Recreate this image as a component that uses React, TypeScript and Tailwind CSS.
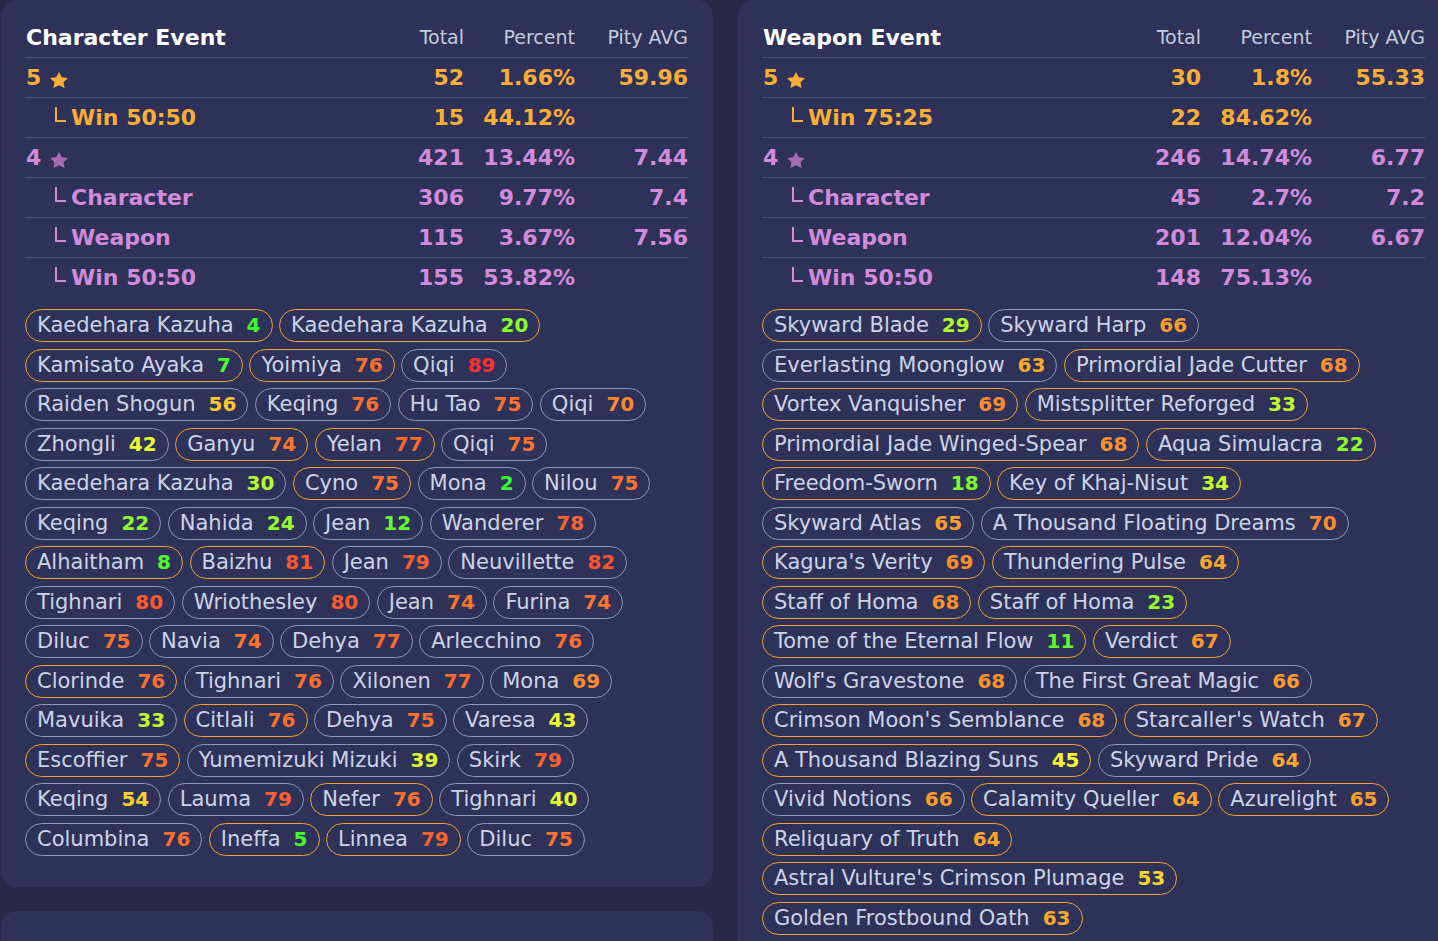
import React from "react";

type Chip = [string, number, boolean]; // name, pity, won 50:50

type StatRow = {
  label: string;
  star?: boolean;
  sub?: boolean;
  tier: 5 | 4;
  total: string;
  percent: string;
  pity?: string;
};

const charRows: Chip[][] = [
  [["Kaedehara Kazuha", 4, true], ["Kaedehara Kazuha", 20, true]],
  [["Kamisato Ayaka", 7, true], ["Yoimiya", 76, true], ["Qiqi", 89, false]],
  [["Raiden Shogun", 56, false], ["Keqing", 76, false], ["Hu Tao", 75, false], ["Qiqi", 70, false]],
  [["Zhongli", 42, false], ["Ganyu", 74, true], ["Yelan", 77, true], ["Qiqi", 75, false]],
  [["Kaedehara Kazuha", 30, false], ["Cyno", 75, true], ["Mona", 2, false], ["Nilou", 75, false]],
  [["Keqing", 22, false], ["Nahida", 24, false], ["Jean", 12, false], ["Wanderer", 78, false]],
  [["Alhaitham", 8, true], ["Baizhu", 81, true], ["Jean", 79, false], ["Neuvillette", 82, false]],
  [["Tighnari", 80, false], ["Wriothesley", 80, false], ["Jean", 74, false], ["Furina", 74, false]],
  [["Diluc", 75, false], ["Navia", 74, false], ["Dehya", 77, false], ["Arlecchino", 76, false]],
  [["Clorinde", 76, true], ["Tighnari", 76, false], ["Xilonen", 77, false], ["Mona", 69, false]],
  [["Mavuika", 33, false], ["Citlali", 76, true], ["Dehya", 75, false], ["Varesa", 43, false]],
  [["Escoffier", 75, true], ["Yumemizuki Mizuki", 39, false], ["Skirk", 79, false]],
  [["Keqing", 54, false], ["Lauma", 79, false], ["Nefer", 76, true], ["Tighnari", 40, false]],
  [["Columbina", 76, false], ["Ineffa", 5, true], ["Linnea", 79, true], ["Diluc", 75, false]],
];

const weaponRows: Chip[][] = [
  [["Skyward Blade", 29, true], ["Skyward Harp", 66, false]],
  [["Everlasting Moonglow", 63, false], ["Primordial Jade Cutter", 68, true]],
  [["Vortex Vanquisher", 69, true], ["Mistsplitter Reforged", 33, true]],
  [["Primordial Jade Winged-Spear", 68, true], ["Aqua Simulacra", 22, true]],
  [["Freedom-Sworn", 18, true], ["Key of Khaj-Nisut", 34, true]],
  [["Skyward Atlas", 65, false], ["A Thousand Floating Dreams", 70, false]],
  [["Kagura's Verity", 69, true], ["Thundering Pulse", 64, true]],
  [["Staff of Homa", 68, true], ["Staff of Homa", 23, true]],
  [["Tome of the Eternal Flow", 11, true], ["Verdict", 67, true]],
  [["Wolf's Gravestone", 68, false], ["The First Great Magic", 66, false]],
  [["Crimson Moon's Semblance", 68, true], ["Starcaller's Watch", 67, true]],
  [["A Thousand Blazing Suns", 45, true], ["Skyward Pride", 64, false]],
  [["Vivid Notions", 66, false], ["Calamity Queller", 64, true], ["Azurelight", 65, true]],
  [["Reliquary of Truth", 64, true]],
  [["Astral Vulture's Crimson Plumage", 53, true]],
  [["Golden Frostbound Oath", 63, true]],
];

const charStats: StatRow[] = [
  { label: "5", star: true, tier: 5, total: "52", percent: "1.66%", pity: "59.96" },
  { label: "Win 50:50", sub: true, tier: 5, total: "15", percent: "44.12%" },
  { label: "4", star: true, tier: 4, total: "421", percent: "13.44%", pity: "7.44" },
  { label: "Character", sub: true, tier: 4, total: "306", percent: "9.77%", pity: "7.4" },
  { label: "Weapon", sub: true, tier: 4, total: "115", percent: "3.67%", pity: "7.56" },
  { label: "Win 50:50", sub: true, tier: 4, total: "155", percent: "53.82%" },
];

const weaponStats: StatRow[] = [
  { label: "5", star: true, tier: 5, total: "30", percent: "1.8%", pity: "55.33" },
  { label: "Win 75:25", sub: true, tier: 5, total: "22", percent: "84.62%" },
  { label: "4", star: true, tier: 4, total: "246", percent: "14.74%", pity: "6.77" },
  { label: "Character", sub: true, tier: 4, total: "45", percent: "2.7%", pity: "7.2" },
  { label: "Weapon", sub: true, tier: 4, total: "201", percent: "12.04%", pity: "6.67" },
  { label: "Win 50:50", sub: true, tier: 4, total: "148", percent: "75.13%" },
];

// green at low pity -> red near hard pity
const pityColor = (v: number) => `hsl(${Math.round(120 - (Math.min(v, 90) / 90) * 120)} 95% 58%)`;

function Star({ tier }: { tier: 5 | 4 }) {
  return (
    <svg
      viewBox="2 2 20 19"
      preserveAspectRatio="none"
      className={`ml-[9px] mt-[5px] h-[16px] w-[18px] ${tier === 5 ? "fill-[#f9ae38]" : "fill-[#a56cb3]"}`}
    >
      <path d="M12 2l3.09 6.26L22 9.27l-5 4.87 1.18 6.88L12 17.77l-6.18 3.25L7 14.14 2 9.27l6.91-1.01L12 2z" />
    </svg>
  );
}

function StatsTable({ title, rows }: { title: string; rows: StatRow[] }) {
  return (
    <div className="pr-px">
      <div className="grid h-10 grid-cols-[1fr_90px_111px_113px] items-center">
        <span className="pl-[1px] text-[22px] font-bold text-white">{title}</span>
        <span className="text-right text-[19px] text-[#c4cadc]">Total</span>
        <span className="text-right text-[19px] text-[#c4cadc]">Percent</span>
        <span className="text-right text-[19px] text-[#c4cadc]">Pity AVG</span>
      </div>
      {rows.map((r, i) => {
        const tone = r.tier === 5 ? "text-[#f9ae38]" : "text-[#d08cd8]";
        return (
          <div
            key={i}
            className={`grid h-10 grid-cols-[1fr_90px_111px_113px] items-center border-t border-[#4a4f74] text-[22px] font-bold ${tone}`}
          >
            <div className="flex items-center">
              {r.sub ? (
                <>
                  <span
                    className={`mb-[6px] ml-[30px] mr-[5px] h-[15px] w-[11px] border-b-2 border-l-2 ${
                      r.tier === 5 ? "border-[#f9ae38]" : "border-[#d08cd8]"
                    }`}
                  />
                  <span>{r.label}</span>
                </>
              ) : (
                <>
                  <span className="pl-[1px]">{r.label}</span>
                  {r.star && <Star tier={r.tier} />}
                </>
              )}
            </div>
            <span className="text-right">{r.total}</span>
            <span className="text-right">{r.percent}</span>
            <span className="text-right">{r.pity ?? ""}</span>
          </div>
        );
      })}
    </div>
  );
}

function PullChip({ chip }: { chip: Chip }) {
  const [name, pity, won] = chip;
  return (
    <div
      className={`flex shrink-0 items-baseline gap-[13px] whitespace-nowrap rounded-full border pl-[11px] pr-[11px] leading-[31px] ${
        won ? "border-[#f0a22e]" : "border-[#8f98b8]"
      }`}
    >
      <span className="text-[21px] text-[#cdd3e6]">{name}</span>
      <span className="text-[20px] font-bold" style={{ color: pityColor(pity) }}>
        {pity}
      </span>
    </div>
  );
}

function EventPanel({ title, stats, rows }: { title: string; stats: StatRow[]; rows: Chip[][] }) {
  return (
    <div className="w-[712px] shrink-0 rounded-2xl bg-[#2e3259] px-6 pb-[31px] pt-[17px]">
      <StatsTable title={title} rows={stats} />
      <div className="mt-3 flex flex-col gap-[6.5px]">
        {rows.map((row, i) => (
          <div key={i} className="flex gap-[6.5px]">
            {row.map((c, j) => (
              <PullChip key={j} chip={c} />
            ))}
          </div>
        ))}
      </div>
    </div>
  );
}

export default function App() {
  return (
    <div className="h-[941px] w-full overflow-hidden bg-[#262948] font-['DejaVu_Sans',sans-serif]">
      <div className="flex gap-[25px] pl-px">
        <div className="flex shrink-0 flex-col gap-6">
          <EventPanel title="Character Event" stats={charStats} rows={charRows} />
          <div className="h-[240px] w-[712px] rounded-2xl bg-[#2e3259]" />
        </div>
        <EventPanel title="Weapon Event" stats={weaponStats} rows={weaponRows} />
      </div>
    </div>
  );
}
